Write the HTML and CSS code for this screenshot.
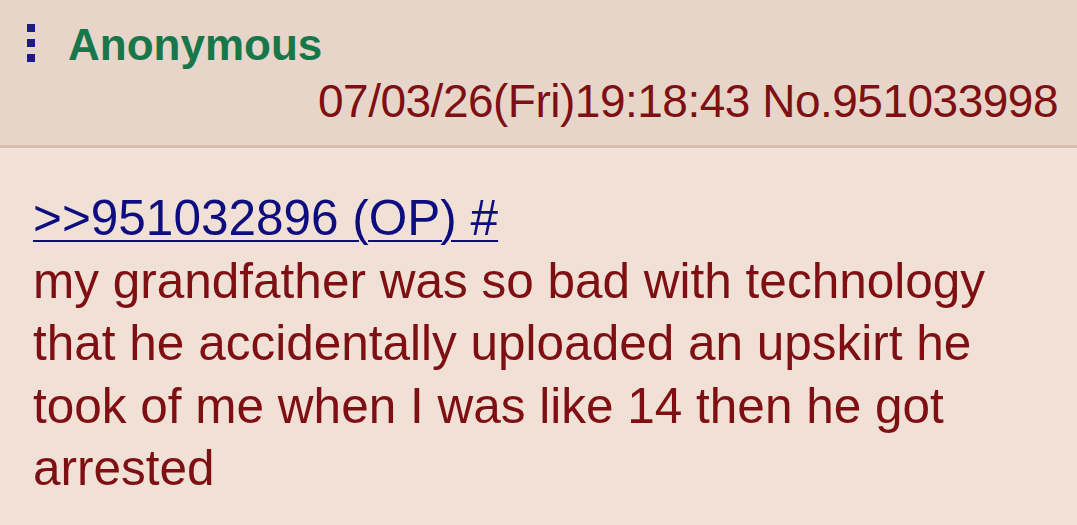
FILE: index.html
```html
<!DOCTYPE html>
<html lang="en">
<head>
    <meta charset="UTF-8">
    <meta name="viewport" content="width=device-width, initial-scale=1.0">
    <title>No.951033998</title>
    <link rel="stylesheet" href="styles.css">
</head>
<body>
    <div class="post">
        <!-- Poster info -->
        <div class="post-info">
            <div class="name-row">
                <svg class="menu-icon" width="8" height="38" viewBox="0 0 8 38">
                    <rect x="0" y="0" width="8" height="8" />
                    <rect x="0" y="15" width="8" height="8" />
                    <rect x="0" y="30" width="8" height="8" />
                </svg>
                <span class="name">Anonymous</span>
            </div>
            <div class="date-row">
                <span class="date">07/03/26(Fri)19:18:43</span>
                <span class="post-num">No.951033998</span>
            </div>
        </div>

        <!-- Post text -->
        <blockquote class="post-message">
            <a href="#p951032896" class="quotelink">&gt;&gt;951032896 (OP) #</a><br>
            my grandfather was so bad with technology that he accidentally uploaded an upskirt he took of me when I was like 14 then he got arrested
        </blockquote>
    </div>
</body>
</html>
```

FILE: styles.css
```css
body {
    margin: 0;
    padding: 0;
    background-color: #f0e0d6;
    font-family: "Liberation Sans", Arial, sans-serif;
    color: #7e0f12;
}
.post {
    width: 1077px;
}
.post-info {
    background-color: #e7d5c9;
    border-bottom: 3px solid #d6beb1;
    padding: 20px 19px 18px 27px;
}
.name-row {
    display: flex;
    align-items: center;
    height: 50px;
}
.menu-icon {
    fill: #1d1a8c;
    margin-right: 33px;
    margin-top: -4px;
}
.name {
    font-size: 44px;
    line-height: 50px;
    font-weight: bold;
    color: #18774a;
}
.date-row {
    margin-top: 5px;
    text-align: right;
    font-size: 46px;
    line-height: 52px;
    letter-spacing: -0.5px;
}
.post-message {
    margin: 0;
    padding: 39px 40px 30px 33px;
    font-size: 49.5px;
    line-height: 62.5px;
}
.quotelink {
    color: #0d0d80;
    text-decoration: underline;
    text-decoration-thickness: 2px;
    text-underline-offset: 5px;
}
```
